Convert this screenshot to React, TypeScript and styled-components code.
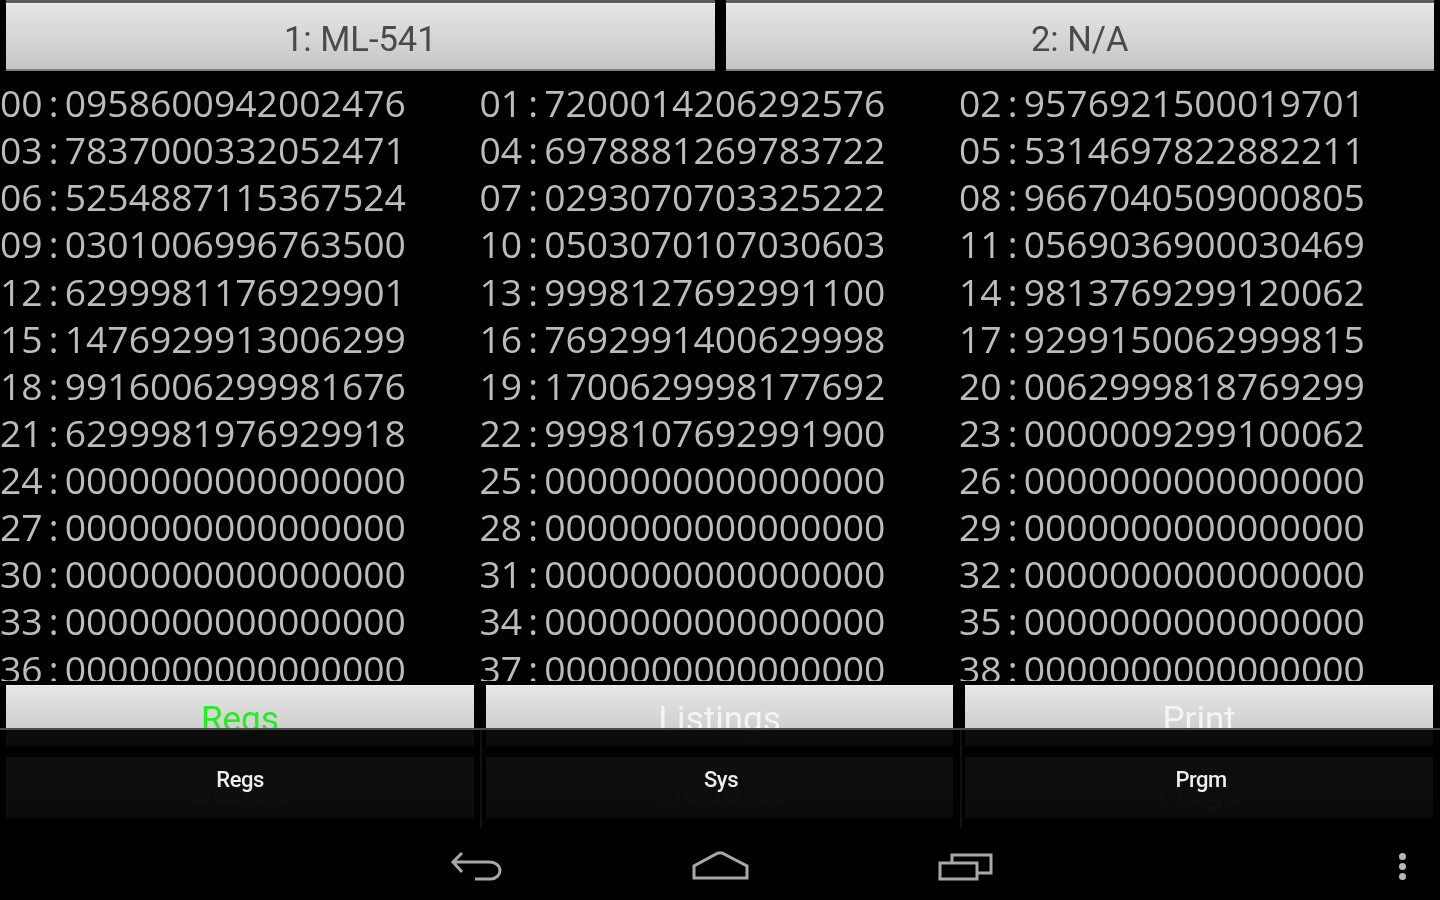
import React from 'react';
import styled, { createGlobalStyle } from 'styled-components';

const GlobalStyle = createGlobalStyle`
  html, body {
    margin: 0;
    padding: 0;
    background: #000;
  }
  * {
    box-sizing: border-box;
  }
`;

const REGISTERS = [
  '0958600942002476', '7200014206292576', '9576921500019701',
  '7837000332052471', '6978881269783722', '5314697822882211',
  '5254887115367524', '0293070703325222', '9667040509000805',
  '0301006996763500', '0503070107030603', '0569036900030469',
  '6299981176929901', '9998127692991100', '9813769299120062',
  '1476929913006299', '7692991400629998', '9299150062999815',
  '9916006299981676', '1700629998177692', '0062999818769299',
  '6299981976929918', '9998107692991900', '0000009299100062',
  '0000000000000000', '0000000000000000', '0000000000000000',
  '0000000000000000', '0000000000000000', '0000000000000000',
  '0000000000000000', '0000000000000000', '0000000000000000',
  '0000000000000000', '0000000000000000', '0000000000000000',
  '0000000000000000', '0000000000000000', '0000000000000000',
];

const Screen = styled.div`
  position: relative;
  width: 1440px;
  height: 900px;
  overflow: hidden;
  background: #000;
  font-family: 'Open Sans', 'Liberation Sans', sans-serif;
  filter: blur(0.7px);
`;

const UnitRow = styled.div`
  display: flex;
  gap: 11px;
  height: 71px;
  padding-top: 3px;
  padding-left: 6px;
  padding-right: 6px;
`;

const Button = styled.div<{ $color?: string; $size: number; $textTop: number }>`
  flex: 1;
  display: flex;
  justify-content: center;
  align-items: flex-start;
  padding-top: ${props => props.$textTop}px;
  background: linear-gradient(to bottom, #e6e6e6, #c6c6c6);
  border-top: 1px solid #f2f2f2;
  border-bottom: 2px solid #808080;
  color: ${props => props.$color || '#4a4a4a'};
  font-size: ${props => props.$size}px;
  font-family: 'Roboto', 'Liberation Sans', sans-serif;
  font-weight: 400;
  line-height: 40px;
`;

const UnitButton = styled(Button)`
  box-shadow: 0 -3px 0 #5c5c5c;
`;

const RegisterGrid = styled.div`
  display: grid;
  grid-template-columns: repeat(3, 479.5px);
  grid-auto-rows: 47.13px;
  align-content: start;
  height: 610px;
  padding-top: 8px;
  overflow: hidden;
`;

const Register = styled.div`
  display: flex;
  align-items: center;
  color: #bcbcbc;
  font-size: 37.3px;
  font-weight: 400;
  white-space: nowrap;
`;

const Colon = styled.span`
  width: 22px;
  text-align: center;
`;

const ActionRows = styled.div`
  display: grid;
  grid-template-columns: repeat(3, 1fr);
  grid-auto-rows: 62px;
  gap: 10px 12px;
  padding: 4px 7px 0 6px;
`;

const MenuOverlay = styled.div`
  position: absolute;
  left: 0;
  top: 728px;
  width: 1440px;
  height: 100px;
  display: grid;
  grid-template-columns: repeat(3, 1fr);
  background: rgba(0, 0, 0, 0.94);
  border-top: 2px solid #4a4a4a;
`;

const MenuItem = styled.div`
  display: flex;
  justify-content: center;
  padding-top: 36px;
  color: #eee;
  font-family: 'Roboto', 'Liberation Sans', sans-serif;
  font-size: 22px;
  font-weight: 500;
  line-height: 28px;
  letter-spacing: -0.5px;

  & + & {
    border-left: 2px solid #111;
  }
`;

const NavBar = styled.div`
  position: absolute;
  left: 0;
  bottom: 0;
  width: 1440px;
  height: 72px;
  display: flex;
  align-items: center;
  justify-content: center;
  gap: 160px;
  background: #000;
`;

const NavIcon = styled.svg`
  width: 82px;
  height: 44px;
  fill: none;
  stroke: #a8a8a8;
  stroke-width: 3;
`;

const Overflow = styled.div`
  position: absolute;
  left: 1399px;
  top: 25px;
  display: flex;
  flex-direction: column;
  gap: 3px;
`;

const Dot = styled.span`
  width: 7px;
  height: 7px;
  border-radius: 50%;
  background: #b8b8b8;
`;

const App = () => {
  return (
    <Screen>
      <GlobalStyle />
      <UnitRow>
        <UnitButton $size={34.5} $textTop={15}>1: ML-541</UnitButton>
        <UnitButton $size={34.5} $textTop={15}>2: N/A</UnitButton>
      </UnitRow>
      <RegisterGrid>
        {REGISTERS.map((value, i) => (
          <Register key={i}>
            {String(i).padStart(2, '0')}
            <Colon>:</Colon>
            {value}
          </Register>
        ))}
      </RegisterGrid>
      <ActionRows>
        <Button $size={35} $color="#22ee22" $textTop={14}>Regs</Button>
        <Button $size={35} $color="#f4f4f4" $textTop={14}>Listings</Button>
        <Button $size={35} $color="#f4f4f4" $textTop={14}>Print</Button>
        <Button $size={35} $color="#f4f4f4" $textTop={14}>States</Button>
        <Button $size={35} $color="#f4f4f4" $textTop={14}>Modules</Button>
        <Button $size={35} $color="#f4f4f4" $textTop={14}>Flags</Button>
      </ActionRows>
      <MenuOverlay>
        <MenuItem>Regs</MenuItem>
        <MenuItem>Sys</MenuItem>
        <MenuItem>Prgm</MenuItem>
      </MenuOverlay>
      <NavBar>
        <NavIcon viewBox="0 0 82 44">
          <path d="M25 11 L16 20 L25 30 M16 20 H52 C59 20 63 24 63 28.5 C63 33 59 37 54 37 H38" />
        </NavIcon>
        <NavIcon viewBox="0 0 82 44">
          <path d="M15 36 V24 L39 11 H43 L68 24 V36 Z" />
        </NavIcon>
        <NavIcon viewBox="0 0 82 44">
          <path d="M19 21 H56 V37 H19 Z M31 21 V13 H70 V31 H56" />
        </NavIcon>
        <Overflow>
          <Dot />
          <Dot />
          <Dot />
        </Overflow>
      </NavBar>
    </Screen>
  );
};

export default App;
